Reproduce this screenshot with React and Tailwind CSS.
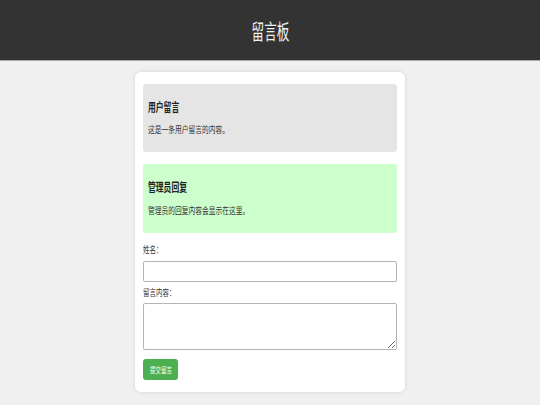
export default function App() {
  const font = { fontFamily: '"Noto Sans CJK SC", "Noto Sans", sans-serif' };
  return (
    <div className="min-h-[405px] w-[540px] bg-[#f0f0f0]" style={font}>
      <header className="flex h-[61px] items-center justify-center border-b border-[#a8a8a8] bg-[#333333]">
        <span className="inline-block origin-center scale-x-[0.6] whitespace-nowrap text-[21px] leading-[21px] text-[#f2f2f2]">
          留言板
        </span>
      </header>
      <main className="pt-[11px]">
        <div className="mx-auto w-[270px] rounded-[6px] bg-white px-2 pb-[12px] pt-[12px] shadow-[0_0_4px_rgba(0,0,0,0.12)]">
          <div className="h-[68px] rounded-[3px] bg-[#e5e5e5] px-[5px] pt-[17px]">
            <div className="flex h-[12px] items-center whitespace-nowrap leading-none">
              <span className="inline-block origin-left scale-x-[0.65] text-[12px] font-bold leading-[12px] text-[#222]">
                用户留言
              </span>
            </div>
            <div className="mt-[12px] flex h-[9px] items-center whitespace-nowrap leading-none">
              <span className="inline-block origin-left scale-x-[0.75] text-[9px] leading-[9px] text-[#333]">
                这是一条用户留言的内容。
              </span>
            </div>
          </div>
          <div className="mt-[12px] h-[69px] rounded-[3px] bg-[#ccffcc] px-[5px] pt-[17px]">
            <div className="flex h-[12px] items-center whitespace-nowrap leading-none">
              <span className="inline-block origin-left scale-x-[0.65] text-[12px] font-bold leading-[12px] text-[#222]">
                管理员回复
              </span>
            </div>
            <div className="mt-[13px] flex h-[9px] items-center whitespace-nowrap leading-none">
              <span className="inline-block origin-left scale-x-[0.75] text-[9px] leading-[9px] text-[#333]">
                管理员的回复内容会显示在这里。
              </span>
            </div>
          </div>
          <div className="mt-[12px] flex h-[9px] items-center whitespace-nowrap leading-none">
            <span className="inline-block origin-left scale-x-[0.72] text-[9px] leading-[9px] text-[#333]">
              姓名：
            </span>
          </div>
          <input
            type="text"
            className="mt-[7px] block h-[21px] w-full rounded-[2px] border border-[#b5b5b5] bg-white outline-none"
          />
          <div className="mt-[6px] flex h-[9px] items-center whitespace-nowrap leading-none">
            <span className="inline-block origin-left scale-x-[0.72] text-[9px] leading-[9px] text-[#333]">
              留言内容：
            </span>
          </div>
          <textarea className="mt-[6px] block h-[47px] w-full rounded-[2px] border border-[#b5b5b5] bg-white outline-none" />
          <button className="mt-[9px] flex h-[21px] w-[35px] items-center justify-center rounded-[3px] bg-[#4caf50] leading-none">
            <span className="inline-block origin-center scale-x-[0.73] whitespace-nowrap text-[7.5px] leading-[8px] text-white">
              提交留言
            </span>
          </button>
        </div>
      </main>
    </div>
  );
}
